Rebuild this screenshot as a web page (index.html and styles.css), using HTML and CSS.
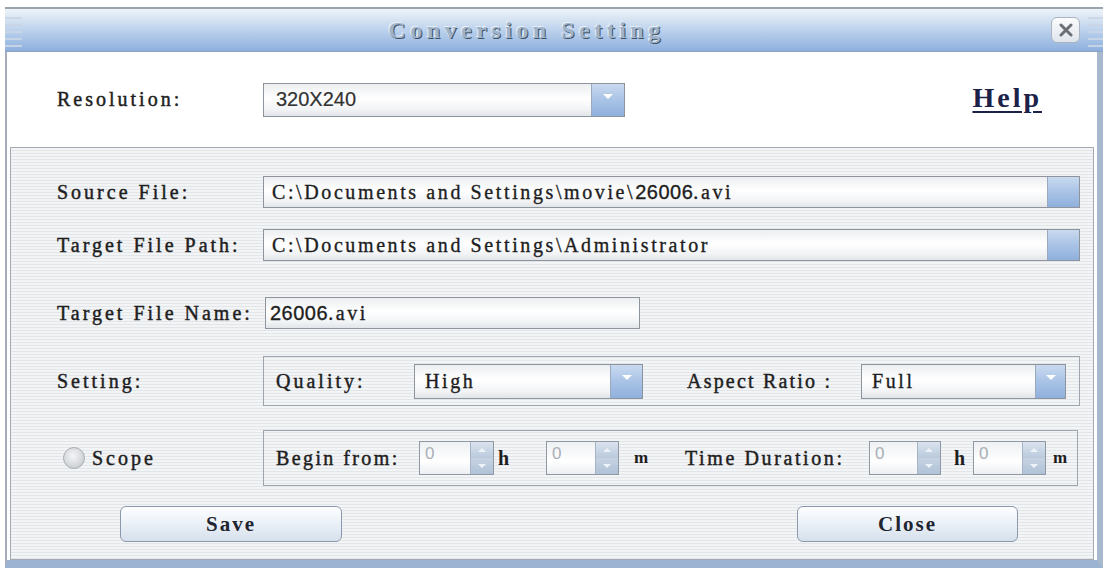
FILE: index.html
```html
<!DOCTYPE html>
<html>
<head>
<meta charset="utf-8">
<title>Conversion Setting</title>
<link rel="stylesheet" href="styles.css">
</head>
<body>
<div class="window">
  <div class="titlebar">
    <span class="grip"></span>
    <span class="title">Conversion Setting</span>
    <span class="close"><svg width="16" height="14" viewBox="0 0 16 14"><path d="M3 2 L13 12 M13 2 L3 12" stroke="#6b7077" stroke-width="3" stroke-linecap="round"/></svg></span>
    <span class="grip grip-r"></span>
  </div>
  <div class="body">
    <div class="top">
      <span class="lbl">Resolution:</span>
      <div class="combo res"><span class="val sans">320X240</span><span class="drop"><svg width="12" height="8" viewBox="0 0 12 8"><path d="M1 1 H11 L6 6 Z" fill="#ffffff"/></svg></span></div>
      <a class="help">Help</a>
    </div>
    <div class="panel">
      <div class="row">
        <span class="lbl">Source File:</span>
        <div class="field path"><span class="val">C:\Documents and Settings\movie\<span class="num">26006</span>.avi</span><span class="browse"></span></div>
      </div>
      <div class="row r2">
        <span class="lbl">Target File Path:</span>
        <div class="field path"><span class="val">C:\Documents and Settings\Administrator</span><span class="browse"></span></div>
      </div>
      <div class="row r3">
        <span class="lbl">Target File Name:</span>
        <div class="field name"><span class="val"><span class="num">26006</span>.avi</span></div>
      </div>
      <div class="row r4">
        <span class="lbl">Setting:</span>
        <div class="group g-setting">
          <span class="glbl q">Quality:</span>
          <div class="combo c-high"><span class="val">High</span><span class="drop"><svg width="12" height="8" viewBox="0 0 12 8"><path d="M1 1 H11 L6 6 Z" fill="#ffffff"/></svg></span></div>
          <span class="glbl ar">Aspect Ratio :</span>
          <div class="combo c-full"><span class="val">Full</span><span class="drop"><svg width="12" height="8" viewBox="0 0 12 8"><path d="M1 1 H11 L6 6 Z" fill="#ffffff"/></svg></span></div>
        </div>
      </div>
      <div class="row r5">
        <span class="lbl scope"><span class="radio"></span><span class="scope-t">Scope</span></span>
        <div class="group g-scope">
          <span class="glbl bf">Begin from:</span>
          <div class="spin s1"><span class="sv">0</span><span class="sb"><i class="up"></i><i class="dn"></i></span></div>
          <span class="unit u1">h</span>
          <div class="spin s2"><span class="sv">0</span><span class="sb"><i class="up"></i><i class="dn"></i></span></div>
          <span class="unit u2">m</span>
          <span class="glbl td">Time Duration:</span>
          <div class="spin s3"><span class="sv">0</span><span class="sb"><i class="up"></i><i class="dn"></i></span></div>
          <span class="unit u3">h</span>
          <div class="spin s4"><span class="sv">0</span><span class="sb"><i class="up"></i><i class="dn"></i></span></div>
          <span class="unit u4">m</span>
        </div>
      </div>
      <div class="buttons">
        <button class="btn save">Save</button>
        <button class="btn closeb">Close</button>
      </div>
    </div>
  </div>
</div>
</body>
</html>
```
FILE: styles.css
```css
* { box-sizing: border-box; }
html, body { margin: 0; padding: 0; background: #ffffff; }
body {
  font-family: "Liberation Serif", "DejaVu Serif", serif;
  color: #1e1e1e;
}
.window {
  width: 1098px;
  margin: 7px 0 0 5px;
}
.titlebar {
  height: 45px;
  display: flex;
  align-items: center;
  border-top: 2px solid #9aa3ae;
  background: linear-gradient(to bottom, #eef3f9 0%, #d6e3f2 25%, #b3cbea 60%, #8eb0de 100%);
  border-bottom: 1px solid #8aa2c2;
}
.grip {
  width: 17px;
  height: 36px;
  background: repeating-linear-gradient(to bottom, transparent 0 5px, #c9d6e6 5px 7px);
  opacity: 0.9;
}
.grip-r { width: 15px; margin-left: 8px; }
.title {
  flex: 1;
  text-align: center;
  padding-right: 20px;
  font-family: "Liberation Serif", serif;
  font-weight: bold;
  font-size: 24px;
  letter-spacing: 4.5px;
  color: #9fb3c9;
  text-shadow: 1px 1px 0 #3f5368, -1px -1px 0 #e8f0f8;
}
.close {
  width: 29px;
  height: 26px;
  border: 1px solid #aab4c0;
  border-radius: 6px;
  background: linear-gradient(to bottom, #fbfcfd, #dfe5ec);
  display: flex;
  align-items: center;
  justify-content: center;
}
.body {
  border-left: 2px solid #a4adb8;
  border-right: 6px solid #a9b9cd;
  border-bottom: 8px solid #9cb3d1;
  height: 516px;
}
.top {
  height: 95px;
  background: #ffffff;
  display: flex;
  align-items: center;
  padding: 0 55px 0 50px;
}
.lbl {
  width: 206px;
  flex: none;
  font-size: 20px;
  letter-spacing: 3px;
  -webkit-text-stroke: 0.45px #1e1e1e;
  white-space: nowrap;
}
.sans { font-family: "Liberation Sans", Arial, sans-serif; font-size: 20px; letter-spacing: 0 !important; }
.num { font-family: "Liberation Sans", Arial, sans-serif; letter-spacing: 0.5px; }
.combo, .field {
  display: flex;
  align-items: stretch;
  border: 1px solid #8d949c;
  background: linear-gradient(to bottom, #eceef1 0%, #ffffff 45%, #f1f3f5 80%, #e2e5e9 100%);
}
.combo .val, .field .val {
  flex: 1;
  display: flex;
  align-items: center;
  font-size: 20px;
  letter-spacing: 2.6px;
  padding-left: 8px;
  white-space: nowrap;
  overflow: hidden;
  -webkit-text-stroke: 0.35px #1e1e1e;
}
.drop, .browse {
  width: 33px;
  flex: none;
  border-left: 1px solid #9aa9bd;
  background: linear-gradient(to bottom, #c9daef 0%, #a9c3e6 50%, #8fb0dc 100%);
  display: flex;
  justify-content: center;
  padding-top: 9px;
}
.browse { width: 32px; }
.res { width: 362px; height: 34px; }
.res .val { padding-left: 12px; color: #333; -webkit-text-stroke: 0.2px #333; }
.help {
  margin-left: auto;
  font-family: "Liberation Serif", serif;
  font-weight: bold;
  font-size: 28px;
  letter-spacing: 3px;
  color: #1c2148;
  text-decoration: underline;
  text-decoration-thickness: 2px;
  text-underline-offset: 4px;
  padding-bottom: 4px;
}
.panel {
  margin: 0 3px;
  height: 413px;
  border: 1px solid #a2a9b2;
  background: repeating-linear-gradient(to bottom, #f3f4f6 0 2px, #e3e6e9 2px 3px);
  padding: 28px 13px 0 46px;
}
.row {
  display: flex;
  align-items: center;
}
.path { flex: 1; height: 32px; }
.r2 { margin-top: 21px; }
.r3 { margin-top: 36px; }
.name { width: 375px; height: 32px; margin-left: 2px; }
.name .val { padding-left: 4px; }
.r4 { margin-top: 27px; }
.r5 { margin-top: 24px; }
.group {
  flex: 1;
  display: flex;
  align-items: center;
  border: 1px solid #9ea5ad;
  padding-left: 12px;
}
.g-setting { height: 50px; }
.g-scope { height: 56px; margin-right: 2px; }
.glbl {
  flex: none;
  font-size: 20px;
  letter-spacing: 3px;
  -webkit-text-stroke: 0.45px #1e1e1e;
  white-space: nowrap;
}
.q { width: 138px; }
.ar { width: 174px; margin-left: 44px; letter-spacing: 2.2px; }
.c-high { width: 229px; height: 35px; }
.c-full { width: 205px; height: 35px; }
.c-high .val, .c-full .val { padding-left: 10px; }
.c-high .drop, .c-full .drop { width: 32px; }
.c-full .drop { width: 30px; }
.bf { width: 143px; letter-spacing: 2.4px; }
.td { width: 184px; letter-spacing: 2.6px; }
.spin {
  height: 34px;
  display: flex;
  border: 1px solid #8f98a3;
  background: linear-gradient(to bottom, #eef0f3, #ffffff 60%, #eceff2);
}
.s1 { width: 75px; }
.s2 { width: 73px; }
.s3 { width: 72px; }
.s4 { width: 73px; }
.sv {
  flex: 1;
  font-family: "Liberation Sans", Arial, sans-serif;
  font-size: 17px;
  color: #a9b0b8;
  padding: 2px 0 0 5px;
}
.sb {
  width: 23px;
  display: flex;
  flex-direction: column;
  border-left: 1px solid #a7b4c3;
}
.sb i {
  flex: 1;
  display: flex;
  align-items: center;
  justify-content: center;
  background: linear-gradient(to bottom, #dbe4ee, #b9c9dc);
}
.sb i.dn { border-top: 1px solid #c7d2de; background: linear-gradient(to bottom, #c4d2e2, #b0c2d7); }
.sb i::after {
  content: "";
  width: 0; height: 0;
  border-left: 4px solid transparent;
  border-right: 4px solid transparent;
}
.sb i.up::after { border-bottom: 4px solid #eef3f8; }
.sb i.dn::after { border-top: 4px solid #eef3f8; }
.unit {
  flex: none;
  font-size: 20px;
  font-weight: bold;
  color: #1e1e1e;
}
.u2, .u4 { font-size: 17px; }
.u1 { width: 52px; padding-left: 4px; }
.u2 { width: 66px; padding-left: 15px; }
.u3 { width: 32px; padding-left: 13px; }
.u4 { padding-left: 7px; }
.scope { display: flex; align-items: center; }
.radio {
  width: 22px;
  height: 22px;
  border-radius: 50%;
  margin-left: 6px;
  border: 1px solid #a9aeb4;
  background: radial-gradient(circle at 45% 40%, #f4f5f6 0%, #d7dadd 55%, #b9bdc2 100%);
}
.scope-t { margin-left: 7px; }
.buttons {
  display: flex;
  margin-top: 20px;
}
.btn {
  height: 36px;
  border: 1px solid #8c99ab;
  border-radius: 6px;
  background: linear-gradient(to bottom, #fdfeff 0%, #eef3f9 40%, #d6e0ec 100%);
  font-family: "Liberation Serif", serif;
  font-weight: bold;
  font-size: 21px;
  letter-spacing: 2px;
  color: #1f2530;
  padding: 0;
}
.save { width: 222px; margin-left: 63px; }
.closeb { width: 221px; margin-left: 455px; }
```
